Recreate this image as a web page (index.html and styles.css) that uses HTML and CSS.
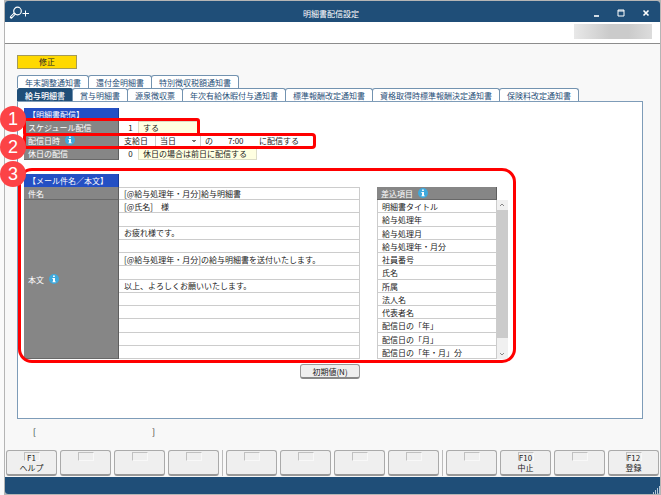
FILE: index.html
```
<!DOCTYPE html>
<html lang="ja">
<head>
  <meta charset="UTF-8">
  <meta name="viewport" content="width=device-width, initial-scale=1.0">
  <title>明細書配信設定</title>
  <link rel="stylesheet" href="styles.css">
</head>
<body>
  <svg width="0" height="0" class="defs">
    <symbol id="info" viewBox="0 0 10 10">
      <circle cx="5" cy="5" r="5" fill="#3fa9dc"/>
      <path d="M4 4h2v3.4h.8v.9H3.4v-.9H4V4.9h-.6V4zM4.1 1.6h1.7v1.5H4.1z" fill="#fff"/>
    </symbol>
  </svg>

  <div class="window">
    <header class="titlebar">
      <svg class="search-icon" viewBox="0 0 20 14">
        <circle cx="8.5" cy="5" r="3.8" fill="none" stroke="#fff" stroke-width="1.2"/>
        <path d="M5.4 7.9L2.2 11.2" stroke="#fff" stroke-width="2.8" stroke-linecap="round"/>
        <path d="M5.2 8.1L2.4 11" stroke="#1f4e78" stroke-width="1"/>
        <path d="M13.5 7.5h6.5M16.5 4.5v6" stroke="#fff" stroke-width="1"/>
      </svg>
      <h1>明細書配信設定</h1>
      <div class="window-buttons">
        <button type="button" aria-label="最小化"><svg viewBox="0 0 8 8"><path d="M2 7h5" stroke="#fff" stroke-width="1.6"/></svg></button>
        <button type="button" aria-label="最大化"><svg viewBox="0 0 8 8"><path d="M1 1h6v6H1zM1 2h6" fill="none" stroke="#fff"/></svg></button>
        <button type="button" aria-label="閉じる"><svg viewBox="0 0 8 8"><path d="M1.5 1.5l5 5M6.5 1.5l-5 5" stroke="#fff" stroke-width="1.6"/></svg></button>
      </div>
    </header>
    <div class="infobar"><div class="company"></div></div>

    <main>
      <div class="mode">修正</div>

      <nav class="tabs">
        <a href="#">年末調整通知書</a>
        <a href="#">還付金明細書</a>
        <a href="#">特別徴収税額通知書</a>
      </nav>
      <nav class="tabs">
        <a href="#" class="active">給与明細書</a>
        <a href="#">賞与明細書</a>
        <a href="#">源泉徴収票</a>
        <a href="#">年次有給休暇付与通知書</a>
        <a href="#">標準報酬改定通知書</a>
        <a href="#">資格取得時標準報酬決定通知書</a>
        <a href="#">保険料改定通知書</a>
      </nav>

      <form class="panel">
        <section>
          <h2>【明細書配信】</h2>
          <div class="row">
            <label class="head" for="schedule">スケジュール配信</label>
            <input class="code" id="schedule" value="1">
            <span class="meaning">する</span>
          </div>
          <div class="row">
            <label class="head" for="day">配信日時 <svg class="info"><use href="#info"/></svg></label>
            <span class="base-day">支給日</span>
            <select id="day"><option>当日</option></select>
            <span class="particle">の</span>
            <input class="time" aria-label="配信時刻" value="7:00">
            <span>に配信する</span>
          </div>
          <div class="row">
            <label class="head" for="holiday">休日の配信</label>
            <input class="code" id="holiday" value="0">
            <span class="meaning wide">休日の場合は前日に配信する</span>
          </div>
        </section>

        <section class="mail">
          <div class="mail-left">
            <h2>【メール件名／本文】</h2>
            <div class="row">
              <label class="head" for="subject">件名</label>
              <input class="line subject" id="subject" value="[@給与処理年・月分]給与明細書">
            </div>
            <div class="body-row">
              <label class="head" for="line1">本文 <svg class="info"><use href="#info"/></svg></label>
              <div class="lines">
                <input class="line" id="line1" value="[@氏名]　様">
                <input class="line" aria-label="本文2行目">
                <input class="line" aria-label="本文3行目" value="お疲れ様です。">
                <input class="line" aria-label="本文4行目">
                <input class="line" aria-label="本文5行目" value="[@給与処理年・月分]の給与明細書を送付いたします。">
                <input class="line" aria-label="本文6行目">
                <input class="line" aria-label="本文7行目" value="以上、よろしくお願いいたします。">
                <input class="line" aria-label="本文8行目">
                <input class="line" aria-label="本文9行目">
                <input class="line" aria-label="本文10行目">
                <input class="line" aria-label="本文11行目">
                <input class="line" aria-label="本文12行目">
              </div>
            </div>
            <button type="button" class="default-button">初期値(N)</button>
          </div>

          <div class="merge">
            <h3 class="head">差込項目 <svg class="info"><use href="#info"/></svg></h3>
            <div class="merge-list">
              <ul>
                <li>明細書タイトル</li>
                <li>給与処理年</li>
                <li>給与処理月</li>
                <li>給与処理年・月分</li>
                <li>社員番号</li>
                <li>氏名</li>
                <li>所属</li>
                <li>法人名</li>
                <li>代表者名</li>
                <li>配信日の「年」</li>
                <li>配信日の「月」</li>
                <li>配信日の「年・月」分</li>
              </ul>
              <div class="scrollbar">
                <svg viewBox="0 0 10 10"><path d="M3 6l2-2 2 2" fill="none" stroke="#888"/></svg>
                <div class="thumb"></div>
                <svg viewBox="0 0 10 10"><path d="M3 4l2 2 2-2" fill="none" stroke="#888"/></svg>
              </div>
            </div>
          </div>
        </section>

        <div class="frame frame1"></div>
        <div class="frame frame2"></div>
        <div class="frame frame3"></div>
        <div class="badge badge1">1</div>
        <div class="badge badge2">2</div>
        <div class="badge badge3">3</div>
      </form>

      <div class="status"><span>[</span><span>]</span></div>
    </main>

    <div class="keys">
      <button type="button"><kbd>F1</kbd>ヘルプ</button>
      <button type="button" aria-label="F2"><kbd></kbd></button>
      <button type="button" aria-label="F3"><kbd></kbd></button>
      <button type="button" aria-label="F4"><kbd></kbd></button>
      <i></i>
      <button type="button" aria-label="F5"><kbd></kbd></button>
      <button type="button" aria-label="F6"><kbd></kbd></button>
      <button type="button" aria-label="F7"><kbd></kbd></button>
      <button type="button" aria-label="F8"><kbd></kbd></button>
      <i></i>
      <button type="button" aria-label="F9"><kbd></kbd></button>
      <button type="button"><kbd>F10</kbd>中止</button>
      <button type="button" aria-label="F11"><kbd></kbd></button>
      <button type="button"><kbd>F12</kbd>登録</button>
    </div>
    <footer>
      <svg viewBox="0 0 8 8"><path d="M7 0h1v8H7zM5 2h1v6H5zM3 4h1v4H3zM1 6h1v2H1z" fill="#b4c6d6"/></svg>
    </footer>
  </div>
</body>
</html>
```
FILE: styles.css
```
* {
  box-sizing: border-box;
}

body {
  margin: 0;
  padding: 1px 1px 1px 4px;
  min-height: 100vh;
  display: flex;
  background: linear-gradient(to right, #fafafa 4px, #b5b5b5 4px);
  font-family: "Noto Sans CJK JP", sans-serif;
  font-size: 8px;
  line-height: 13px;
  color: #222;
}

.defs {
  position: absolute;
}

button, input, select {
  font: inherit;
  color: inherit;
  margin: 0;
  padding: 0;
  border: 0;
  border-radius: 0;
  outline: none;
}

h1, h2, h3, ul {
  margin: 0;
  padding: 0;
  font-size: 8px;
  font-weight: normal;
  list-style: none;
}

.window {
  flex: 1;
  display: flex;
  flex-direction: column;
  margin-left: 1px;
  background: #f8f8f8;
  border-radius: 3px;
}

.titlebar {
  display: grid;
  grid-template-columns: 1fr auto 1fr;
  align-items: center;
  height: 21px;
  padding: 3px 10px 0 4px;
  background: #1f4e78;
  border-radius: 3px 3px 0 0;
  color: #fff;
}

.titlebar h1 {
  padding-left: 3px;
}

.search-icon {
  width: 20px;
  height: 14px;
}

.window-buttons {
  display: flex;
  justify-content: flex-end;
  gap: 17px;
}

.window-buttons button {
  display: flex;
  background: none;
}

.window-buttons svg {
  width: 8px;
  height: 8px;
}

.infobar {
  display: flex;
  justify-content: flex-end;
  height: 22px;
  padding: 2px 8px;
  background: #fff;
  border-bottom: 1px solid #8c8c8c;
}

.company {
  width: 78px;
  height: 15px;
  background: linear-gradient(to right, #e8e8e8, #cbcbcb 45%, #cbcbcb 70%, #dcdcdc);
}

main {
  flex: 1;
  display: flex;
  flex-direction: column;
  padding: 11px 17px 0 12px;
}

.mode {
  width: 60px;
  height: 14px;
  margin-bottom: 6px;
  background: #ffd900;
  border: 1px solid #a39a5a;
  line-height: 12px;
  text-align: center;
}

.tabs {
  display: flex;
  height: 13px;
}

.tabs a {
  padding: 0 7px;
  background: #fff;
  border: 1px solid #7393b0;
  border-bottom: 0;
  border-radius: 3px 3px 0 0;
  margin-right: -1px;
  color: #1f4e78;
  text-decoration: none;
  white-space: nowrap;
}

.tabs a.active {
  background: #1f4e78;
  border-color: #1f4e78;
  color: #fff;
  font-weight: 500;
}

.panel {
  position: relative;
  flex: 1;
  margin: 0;
  padding: 6px;
  background: #fff;
  border: 1px solid #7e9cb8;
}

h2 {
  width: 95px;
  height: 13px;
  padding-left: 4px;
  background: #2450c4;
  border-right: 1px solid #163a96;
  color: #fff;
}

.row {
  display: flex;
  align-items: center;
  height: 13px;
}

.head {
  display: flex;
  align-items: center;
  gap: 5px;
  width: 95px;
  height: 13px;
  padding-left: 4px;
  background: #868686;
  border-right: 1px solid #5e5e5e;
  border-bottom: 1px solid #686868;
  color: #fff;
  flex-shrink: 0;
}

.info {
  width: 10px;
  height: 10px;
}

.code {
  width: 19px;
  height: 13px;
  padding-left: 4px;
  text-align: center;
}

.meaning {
  width: 61px;
  height: 13px;
  padding-left: 4px;
  background: #ffffe1;
  border: 1px solid #dcdcc8;
  line-height: 11px;
}

.meaning.wide {
  width: 119px;
}

.base-day {
  width: 36px;
  padding-left: 5px;
}

.row select {
  appearance: none;
  width: 46px;
  height: 13px;
  padding-left: 4px;
  border-left: 1px solid #ccc;
  border-right: 1px solid #ccc;
  background:
    linear-gradient(45deg, transparent 50%, #777 50%) 36px 6px / 2px 2px no-repeat,
    linear-gradient(-45deg, transparent 50%, #777 50%) 38px 6px / 2px 2px no-repeat,
    #fff;
}

.particle {
  width: 22px;
  padding-left: 4px;
}

.time {
  width: 36px;
  padding-left: 5px;
}

.mail {
  display: flex;
  gap: 17px;
  margin-top: 14px;
}

.mail-left {
  display: flex;
  flex-direction: column;
  width: 336px;
}

.body-row {
  display: flex;
  height: 159px;
}

.body-row .head {
  height: auto;
}

.lines {
  flex: 1;
  display: grid;
  grid-template-rows: repeat(12, 1fr);
}

.line {
  width: 100%;
  min-height: 0;
  height: 100%;
  padding-left: 5px;
  border-right: 1px solid #ccc;
  border-bottom: 1px solid #ccc;
}

.subject {
  flex: 1;
  border-top: 1px solid #ccc;
}

.default-button {
  align-self: flex-end;
  width: 60px;
  height: 15px;
  margin-top: 5px;
  background: #eee;
  border: 1px solid #999;
  border-bottom: 2px solid #888;
  border-radius: 3px;
  line-height: 11px;
}

.merge {
  width: 131px;
  padding-top: 13px;
}

.merge .head {
  width: 120px;
}

.merge-list {
  display: flex;
  height: 159px;
}

.merge-list ul {
  width: 120px;
  display: grid;
  grid-template-rows: repeat(12, 1fr);
  border-left: 1px solid #ccc;
  border-right: 1px solid #ccc;
}

.merge-list li {
  padding-left: 4px;
  border-bottom: 1px solid #ccc;
  line-height: 13px;
  min-height: 0;
}

.scrollbar {
  width: 11px;
  display: flex;
  flex-direction: column;
  background: #f0f0f0;
}

.scrollbar svg {
  width: 10px;
  height: 10px;
}

.thumb {
  flex: 1;
  margin-bottom: 11px;
  background: #cbcbcb;
}

/* callouts over the form */
.frame {
  position: absolute;
  border: 3px solid #f00;
}

.frame1 {
  left: 5px;
  top: 16px;
  width: 177px;
  height: 18px;
  border-radius: 3px;
}

.frame2 {
  left: 5px;
  top: 31px;
  width: 293px;
  height: 16px;
  border-radius: 4px;
}

.frame3 {
  left: 0;
  top: 66px;
  width: 498px;
  height: 195px;
  border-radius: 14px;
}

.badge {
  position: absolute;
  left: -18px;
  width: 26px;
  height: 26px;
  border-radius: 50%;
  background: #fc4346;
  color: #fff;
  font: 18px/26px "Liberation Sans", sans-serif;
  text-align: center;
}

.badge1 {
  top: 4px;
}

.badge2 {
  top: 32px;
}

.badge3 {
  top: 59px;
}

.status {
  display: flex;
  justify-content: space-between;
  width: 138px;
  height: 31px;
  padding-left: 16px;
  line-height: 26px;
}

.keys {
  display: flex;
  gap: 3px;
  padding: 0 1px 1px;
}

.keys button {
  flex: 1;
  display: flex;
  flex-direction: column;
  align-items: center;
  height: 26px;
  background: #efefef;
  border: 1px solid #aaa;
  border-bottom: 2px solid #999;
  border-radius: 3px;
  line-height: 12px;
}

.keys i {
  width: 1px;
  background: #bbb;
}

.keys kbd {
  width: 16px;
  height: 9px;
  margin: 1px 0;
  border: 1px solid #c0c0c0;
  border-right-color: #f8f8f8;
  border-bottom-color: #f8f8f8;
  font: inherit;
  line-height: 9px;
}

footer {
  display: flex;
  justify-content: flex-end;
  align-items: flex-end;
  height: 17px;
  background: #1f4e78;
  border-radius: 0 0 3px 3px;
}

footer svg {
  width: 8px;
  height: 8px;
}
```
